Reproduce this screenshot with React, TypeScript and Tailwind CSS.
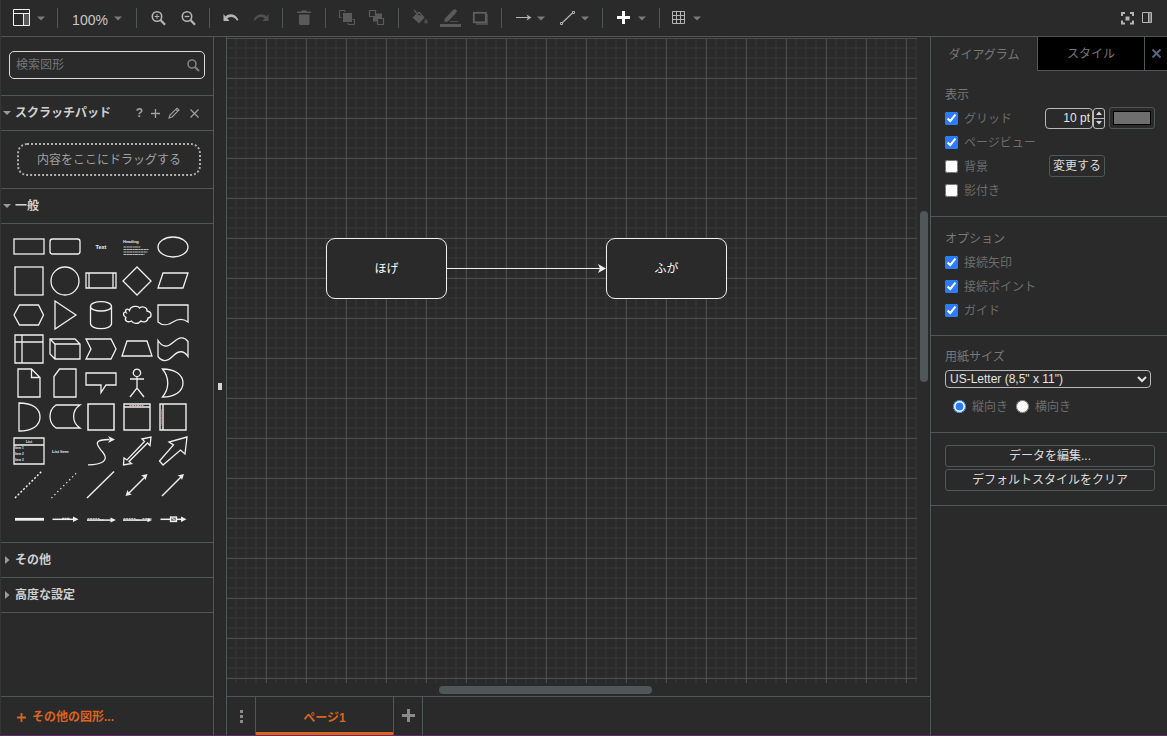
import React, { type ReactNode } from "react";

const canvasGrid =
  "bg-[linear-gradient(to_right,#4c4c4c_1px,transparent_1px),linear-gradient(to_bottom,#4c4c4c_1px,transparent_1px),linear-gradient(to_right,#313131_2px,transparent_2px),linear-gradient(to_bottom,#313131_2px,transparent_2px)] bg-[size:40px_40px,40px_40px,10px_10px,10px_10px] bg-[position:39px_0px,0px_0px,38px_0px,0px_-1px]";

function Caret() {
  return (
    <svg width="8" height="5" viewBox="0 0 8 5" className="shrink-0 fill-[#7a7a7a]" aria-hidden="true">
      <path d="M0 0.5H8L4 4.5Z" />
    </svg>
  );
}

function Icon({ children, className = "w-4" }: { children: ReactNode; className?: string }) {
  return (
    <svg viewBox="0 0 16 16" className={`h-4 shrink-0 overflow-visible ${className}`} fill="none" aria-hidden="true">
      {children}
    </svg>
  );
}

function Tool({ label, children, menu = false }: { label: string; children: ReactNode; menu?: boolean }) {
  return (
    <button
      type="button"
      aria-label={label}
      className={`flex h-7 shrink-0 items-center justify-center gap-1.5 ${menu ? "w-11" : "w-[30px]"}`}
    >
      {children}
      {menu && <Caret />}
    </button>
  );
}

function Group({ width, last = false, children }: { width: string; last?: boolean; children: ReactNode }) {
  return (
    <>
      <div className={`flex shrink-0 items-center justify-center ${width}`}>{children}</div>
      {!last && <div className="h-5 w-px shrink-0 bg-[#505759]" />}
    </>
  );
}

function Toolbar() {
  return (
    <header className="flex h-[37px] shrink-0 items-center border-b border-[#505759]">
      <Group width="w-14">
        <button type="button" aria-label="表示" className="flex h-7 items-center gap-1.5">
          <svg width="18" height="18" viewBox="0 0 18 18" fill="none" aria-hidden="true">
            <rect x="11" y="5" width="5" height="11" fill="#5a5a5a" />
            <path d="M0.5 0.5H16.5V16.5H0.5ZM0.5 4.5H16.5M10.5 4.5V16" stroke="#f0f0f0" />
          </svg>
          <Caret />
        </button>
      </Group>
      <Group width="w-[78px]">
        <button type="button" className="flex h-7 items-center gap-1.5 text-[14px] leading-4 text-[#c8c8c8]">
          <span className="pt-[3px]">100%</span>
          <Caret />
        </button>
      </Group>
      <Group width="w-[72px]">
        <Tool label="拡大">
          <Icon>
            <circle cx="7" cy="6.5" r="4.7" stroke="#b4b4b4" strokeWidth="1.6" />
            <path d="M10.5 10L15 14.8" stroke="#b4b4b4" strokeWidth="2.2" />
            <path d="M7 4.2V8.8M4.7 6.5H9.3" stroke="#b4b4b4" />
          </Icon>
        </Tool>
        <Tool label="縮小">
          <Icon>
            <circle cx="7" cy="6.5" r="4.7" stroke="#b4b4b4" strokeWidth="1.6" />
            <path d="M10.5 10L15 14.8" stroke="#b4b4b4" strokeWidth="2.2" />
            <path d="M4.7 6.5H9.3" stroke="#b4b4b4" strokeWidth="1.4" />
          </Icon>
        </Tool>
      </Group>
      <Group width="w-[72px]">
        <Tool label="元に戻す">
          <Icon>
            <path d="M0.5 4L2.5 6.5C6 3 12.5 3.5 15.5 10L14 10.7C11.5 6.3 7.5 6 4.3 8.3L6.5 11H0.5Z" fill="#b4b4b4" />
          </Icon>
        </Tool>
        <Tool label="やり直し">
          <Icon>
            <path d="M15.5 4L13.5 6.5C10 3 3.5 3.5 0.5 10L2 10.7C4.5 6.3 8.5 6 11.7 8.3L9.5 11H15.5Z" fill="#505050" />
          </Icon>
        </Tool>
      </Group>
      <Group width="w-[42px]">
        <Tool label="削除">
          <Icon>
            <path d="M1 1.5H5L6 0.3H10L11 1.5H15V3H1ZM3 4.5H13.5V14L12.5 15H4L3 14Z" fill="#5a5a5a" />
          </Icon>
        </Tool>
      </Group>
      <Group width="w-[72px]">
        <Tool label="最前面へ">
          <Icon>
            <rect x="4" y="3" width="9" height="9" fill="#5a5a5a" />
            <path d="M6 0.5H0.5V7.5H2.5M15.5 9V14.5H9M9 13V14.5M13.5 9.5H15.5M6 0.5V2" stroke="#5a5a5a" />
          </Icon>
        </Tool>
        <Tool label="最背面へ">
          <Icon>
            <rect x="4" y="3.5" width="9" height="8" fill="#5a5a5a" />
            <path d="M0.5 0.5H6.5V6.5H0.5ZM8.5 8.5H14.5V14.5H8.5Z" fill="#2a2a2a" stroke="#5a5a5a" strokeWidth="1.2" />
          </Icon>
        </Tool>
      </Group>
      <Group width="w-[102px]">
        <Tool label="塗りつぶし色">
          <Icon>
            <path d="M0.5 7.5L7 1.5L12.5 7.5L7 13.5Z" fill="#5a5a5a" />
            <path d="M2 0L8 6.5M3.5 6L7.5 2.5L10.5 6Z" stroke="#5a5a5a" strokeWidth="1.2" fill="#2a2a2a" />
            <path d="M14 8.5C16.5 12 16.5 13.5 14 13.5S11.5 12 14 8.5Z" fill="#4c4c4c" />
          </Icon>
        </Tool>
        <Tool label="線の色">
          <Icon>
            <path d="M2.5 9L10.5 0.5L13 -1L15 1L13.5 3.5L6 11.5L2.5 12Z" fill="#5a5a5a" />
            <path d="M8 11.5H16" stroke="#4c4c4c" />
            <rect x="-2" y="14" width="21" height="3" fill="#5a5a5a" />
          </Icon>
        </Tool>
        <Tool label="影">
          <Icon>
            <path d="M4 15V4H16V15Z" fill="#4a4a4a" />
            <rect x="1.8" y="2.8" width="12" height="9.5" fill="#2a2a2a" stroke="#5f5f5f" strokeWidth="1.8" />
          </Icon>
        </Tool>
      </Group>
      <Group width="w-[100px]">
        <Tool label="接続" menu>
          <Icon>
            <path d="M1 7.5H13" stroke="#b4b4b4" />
            <path d="M11.5 4.5L16.5 7.5L11.5 10.5L13 7.5Z" fill="#b4b4b4" />
          </Icon>
        </Tool>
        <Tool label="ウェイポイント" menu>
          <Icon>
            <path d="M2.5 13.5L14 2.5" stroke="#b4b4b4" strokeWidth="1.2" />
            <path d="M1.5 12.5H3.5V14.5H1.5ZM13.5 1.5H15.5V3.5H13.5Z" fill="#2a2a2a" stroke="#b4b4b4" />
          </Icon>
        </Tool>
      </Group>
      <Group width="w-14">
        <Tool label="挿入" menu>
          <Icon>
            <path d="M7.5 1V14M1 7.5H14" stroke="#ffffff" strokeWidth="3" />
          </Icon>
        </Tool>
      </Group>
      <Group width="w-[52px]" last>
        <Tool label="表" menu>
          <Icon>
            <path d="M1.5 1.5H13.5V13.5H1.5ZM5.5 1.5V13.5M9.5 1.5V13.5M1.5 5.5H13.5M1.5 9.5H13.5" stroke="#b4b4b4" />
          </Icon>
        </Tool>
      </Group>
      <div className="ml-auto flex items-center gap-2 pr-3.5">
        <button type="button" aria-label="全画面">
          <svg width="13" height="13" viewBox="0 0 13 13" fill="none" aria-hidden="true">
            <path d="M1 4V1H4M9 1H12V4M12 8.5V11.5H9M4 11.5H1V8.5" stroke="#b4b4b4" strokeWidth="2" />
            <rect x="4.5" y="4.5" width="4" height="4" fill="#b4b4b4" />
          </svg>
        </button>
        <button type="button" aria-label="フォーマットパネル">
          <svg width="11" height="12" viewBox="0 0 11 12" fill="none" aria-hidden="true">
            <rect x="7" y="1" width="3" height="9" fill="#777777" />
            <path d="M0.5 0.5H9.5V10.5H0.5ZM6.5 1V10.5" stroke="#b4b4b4" />
          </svg>
        </button>
      </div>
    </header>
  );
}

const tiny = { fill: "#eeeeee", stroke: "none", fontWeight: 700 } as const;

const shapes: { name: string; art: ReactNode }[] = [
  { name: "Rectangle", art: <rect x="3.5" y="9.5" width="30" height="15" /> },
  { name: "Rounded Rectangle", art: <rect x="3.5" y="9.5" width="30" height="15" rx="2.5" /> },
  { name: "Text", art: <text x="18.5" y="19.5" textAnchor="middle" fontSize="5.5" {...tiny}>Text</text> },
  {
    name: "Textbox",
    art: (
      <>
        <text x="4.5" y="13.7" fontSize="4" {...tiny}>Heading</text>
        <path d="M5 17.5H22M5 20H30M5 22.5H29M5 25H26" strokeWidth="1.2" strokeDasharray="3 0.4 2 0.3" opacity="0.75" />
      </>
    ),
  },
  { name: "Ellipse", art: <ellipse cx="18.5" cy="17.5" rx="15" ry="10" /> },
  { name: "Square", art: <rect x="4.5" y="3.5" width="28" height="28" /> },
  { name: "Circle", art: <circle cx="18.5" cy="17.5" r="14" /> },
  { name: "Process", art: <path d="M3.5 9.5H33.5V24.5H3.5ZM6.5 9.5V24.5M30.5 9.5V24.5" /> },
  { name: "Diamond", art: <path d="M18.5 3.5L32.5 17.5L18.5 31.5L4.5 17.5Z" /> },
  { name: "Parallelogram", art: <path d="M8.5 9.5H33.5L28.5 24.5H3.5Z" /> },
  { name: "Hexagon", art: <path d="M9 7.5H28L33 17.5L28 27.5H9L3.5 17.5Z" /> },
  { name: "Triangle", art: <path d="M8.5 3.5L29.5 17.5L8.5 31.5Z" /> },
  { name: "Cylinder", art: <path d="M8 9C8 2.5 29 2.5 29 9V26C29 32.8 8 32.8 8 26ZM8 9C8 15 29 15 29 9" /> },
  {
    name: "Cloud",
    art: <path d="M11 13C12 8 20 8 21 10.5C24 8 29 10 28.5 13.5C34 14.5 33.5 20 29.5 20.5C29.5 24 25 25.5 22.5 23.5C19.5 27 14.5 26.5 13 23.5C9 25.5 5.5 23 7.5 20C3.5 18 5 13.5 7.5 15C6 12 9 10.5 11 13Z" />,
  },
  { name: "Document", art: <path d="M3.5 7.5H33.5V24.5C28 20.5 23 21.5 18.5 24.5S8 28.5 3.5 24.5Z" /> },
  { name: "Internal Storage", art: <path d="M4.5 3.5H32.5V31.5H4.5ZM11.5 3.5V31.5M4.5 10.5H32.5" /> },
  { name: "Cube", art: <path d="M3.5 7.5H28.5L33.5 12.5V27.5H8.5L3.5 22.5ZM3.5 7.5L8.5 12.5H33.5M8.5 12.5V27.5" /> },
  { name: "Step", art: <path d="M3.5 7.5H28.5L33.5 17.5L28.5 27.5H3.5L8.5 17.5Z" /> },
  { name: "Trapezoid", art: <path d="M8.5 9.5H28.5L33.5 24.5H3.5Z" /> },
  { name: "Tape", art: <path d="M3.5 9C8 16 13 16 18.5 11S29 4 33.5 10V25C29 18.5 24 19 18.5 24.5S8 31 3.5 25Z" /> },
  { name: "Note", art: <path d="M7.5 3.5H21L29.5 12V31.5H7.5ZM21 3.5V12H29.5" /> },
  { name: "Card", art: <path d="M13 3.5H29.5V31.5H7.5V11Z" /> },
  { name: "Callout", art: <path d="M3.5 7.5H33.5V19.5H23.5L18.5 27V19.5H3.5Z" /> },
  { name: "Actor", art: <path d="M18.5 3.7A3.7 3.7 0 1 1 18.4 3.7ZM18.5 11.2V22.5M11.5 13.5H25.5M11.5 31.5L18.5 22.5L25.5 31.5" /> },
  { name: "Or", art: <path d="M8 3.5C20 3.5 28.5 9 28.5 17.5S20 31.5 8 31.5C15 23 15 12 8 3.5Z" /> },
  { name: "And", art: <path d="M8.5 3.5C22 3.5 29.5 9 29.5 17.5S22 31.5 8.5 31.5Z" /> },
  { name: "Data Storage", art: <path d="M9.5 5.5H33.5C25 11 25 23 33.5 28.5H9.5C1.5 23 1.5 11 9.5 5.5Z" /> },
  { name: "Container", art: <rect x="5.5" y="4.5" width="26" height="26" strokeWidth="1.5" /> },
  {
    name: "Titled Container",
    art: (
      <>
        <path d="M5.5 4.5H31.5V30.5H5.5ZM5.5 7.5H31.5" strokeWidth="1.4" />
        <path d="M11 6H25" stroke="#c9a59c" strokeWidth="1" strokeDasharray="2 0.5" />
      </>
    ),
  },
  {
    name: "Horizontal Container",
    art: (
      <>
        <path d="M5.5 4.5H31.5V30.5H5.5ZM8.5 4.5V30.5" strokeWidth="1.4" />
        <path d="M7 10V26" stroke="#c8564d" strokeWidth="1.2" strokeDasharray="2 0.5" />
      </>
    ),
  },
  {
    name: "List",
    art: (
      <>
        <path d="M3.5 4.5H33.5V30.5H3.5ZM3.5 11.5H33.5" />
        <text x="18.5" y="9.5" textAnchor="middle" fontSize="3.5" {...tiny}>List</text>
        <text x="4.5" y="15.5" fontSize="3" {...tiny}>Item 1</text>
        <text x="4.5" y="21.5" fontSize="3" {...tiny}>Item 2</text>
        <text x="4.5" y="27.5" fontSize="3" {...tiny}>Item 3</text>
      </>
    ),
  },
  { name: "List Item", art: <text x="5.5" y="19.5" fontSize="4" {...tiny}>List Item</text> },
  {
    name: "Curve",
    art: (
      <>
        <path d="M5.5 31.3C19 31.3 27 27.5 20.5 19C12 9.5 12 6 27 6" />
        <path d="M25.5 2.5L32.5 6L25.5 9.5L27.5 6Z" fill="#eeeeee" stroke="none" />
      </>
    ),
  },
  { name: "Bidirectional Arrow", art: <path d="M5 31.5L5.5 24.5L8.5 26.5L26 8L23.5 5.5L32.5 3.5L31.5 12L29 9.5L10.5 28L13 30Z" /> },
  { name: "Arrow", art: <path d="M5 27.5L19 11.5L14.5 8.5L32.5 3.5L30.5 20.5L26 16.5L8.5 31.5Z" /> },
  { name: "Dashed Line", art: <path d="M4.5 30.5L31 4" strokeWidth="1.5" strokeDasharray="2 1.9" /> },
  { name: "Dotted Line", art: <path d="M5 30.5L31 4.5" strokeWidth="1.3" strokeDasharray="1.2 3" /> },
  { name: "Line", art: <path d="M4.5 30.5L31.5 4" strokeWidth="1.4" /> },
  {
    name: "Bidirectional Connector",
    art: (
      <>
        <path d="M10 26L27 9" strokeWidth="1.4" />
        <path d="M7 28.5L9 22.5L10.5 25.5L13.5 27ZM29 6.5L27 12.5L25.5 9.5L22.5 8Z" fill="#eeeeee" stroke="none" />
      </>
    ),
  },
  {
    name: "Directional Connector",
    art: (
      <>
        <path d="M7.5 28.5L27 9" strokeWidth="1.4" />
        <path d="M29.5 6.5L27.5 12.5L26 9.5L23 8Z" fill="#eeeeee" stroke="none" />
      </>
    ),
  },
  { name: "Link", art: <path d="M4.5 17.8H33.5" strokeWidth="2.8" /> },
  {
    name: "Connector with Label",
    art: (
      <>
        <path d="M6 17.8H28" strokeWidth="1.5" />
        <path d="M15.5 17.2H23.5" strokeWidth="2" strokeDasharray="2 0.5" opacity="0.8" />
        <path d="M26.5 15L32 17.8L26.5 20.5Z" fill="#eeeeee" stroke="none" />
      </>
    ),
  },
  {
    name: "Connector with 2 Labels",
    art: (
      <>
        <path d="M4.5 18.6H30" strokeWidth="1.5" />
        <path d="M5 17.3H17M17 18.5H21" strokeWidth="1.4" strokeDasharray="2 0.6" opacity="0.7" />
        <path d="M28 16L33.5 18.6L28 21Z" fill="#eeeeee" stroke="none" />
      </>
    ),
  },
  {
    name: "Connector with 3 Labels",
    art: (
      <>
        <path d="M4.5 18.6H30" strokeWidth="1.5" />
        <path d="M5 17.3H17M17 18.5H21M24 17.3H33" strokeWidth="1.4" strokeDasharray="2 0.6" opacity="0.7" />
        <path d="M29 16.5L33.5 18.6L29 20.8Z" fill="#eeeeee" stroke="none" />
      </>
    ),
  },
  {
    name: "Connector with Symbol",
    art: (
      <>
        <path d="M6 17.8H28" strokeWidth="1.5" />
        <rect x="16" y="15.5" width="6" height="4.5" fill="#777777" />
        <path d="M17 16.4L21 19" strokeWidth="0.8" />
        <path d="M26.5 15L32 17.8L26.5 20.5Z" fill="#eeeeee" stroke="none" />
      </>
    ),
  },
];

function SectionTitle({ open, children, actions }: { open: boolean; children: ReactNode; actions?: ReactNode }) {
  return (
    <div className="flex h-[35px] shrink-0 items-center border-b border-[#505759] pr-3.5">
      <button type="button" aria-expanded={open} className="flex h-full items-center text-[12px] font-bold text-[#d0d0d0]">
        <span className="flex w-3.5 justify-start pl-0.5">
          <svg width="9" height="9" viewBox="0 0 9 9" className="fill-[#9a9a9a]" aria-hidden="true">
            <path d={open ? "M0 2H8L4 6Z" : "M2 0L6.5 4L2 8Z"} />
          </svg>
        </span>
        {children}
      </button>
      {actions}
    </div>
  );
}

function Sidebar() {
  return (
    <aside className="flex w-[213px] shrink-0 flex-col border-r border-[#505759]">
      <div className="border-b border-[#505759] px-2 pt-3.5 pb-4">
        <label className="flex h-7 items-center rounded-[5px] border border-[#dcdcdc] pr-1 pl-1.5">
          <input
            type="search"
            aria-label="検索図形"
            placeholder="検索図形"
            className="min-w-0 flex-1 bg-transparent text-[12px] outline-none placeholder:text-[#757575]"
          />
          <svg width="13" height="13" viewBox="0 0 13 13" fill="none" stroke="#808080" className="shrink-0" aria-hidden="true">
            <circle cx="5" cy="5" r="4" strokeWidth="1.6" />
            <path d="M8 8L12 12" strokeWidth="2.2" />
          </svg>
        </label>
      </div>
      <SectionTitle
        open
        actions={
          <div className="ml-auto flex items-center gap-2 text-[#a0a0a0]">
            <button type="button" aria-label="ヘルプ" className="text-[12px] leading-3 font-bold">?</button>
            <button type="button" aria-label="追加">
              <svg width="9" height="9" viewBox="0 0 9 9" stroke="currentColor" strokeWidth="1.3" aria-hidden="true">
                <path d="M4.5 0V9M0 4.5H9" />
              </svg>
            </button>
            <button type="button" aria-label="編集">
              <svg width="12" height="12" viewBox="0 0 12 12" stroke="currentColor" fill="none" strokeWidth="1.1" aria-hidden="true">
                <path d="M1 11L2 8L9 1.2L11 3L4 10ZM8 2.5L9.7 4.3" />
              </svg>
            </button>
            <button type="button" aria-label="閉じる" className="pl-0.5">
              <svg width="9" height="9" viewBox="0 0 9 9" stroke="currentColor" strokeWidth="1.2" aria-hidden="true">
                <path d="M0.5 0.5L8.5 8.5M8.5 0.5L0.5 8.5" />
              </svg>
            </button>
          </div>
        }
      >
        スクラッチパッド
      </SectionTitle>
      <div className="border-b border-[#505759] py-3 pr-3 pl-4">
        <div className="flex h-[33px] items-center justify-center rounded-[10px] border-2 border-dotted border-[#b0b0b0] text-[12px] text-[#a0a0a0]">
          内容をここにドラッグする
        </div>
      </div>
      <SectionTitle open>一般</SectionTitle>
      <div className="grid shrink-0 grid-cols-[repeat(5,36px)] border-b border-[#505759] pt-1.5 pb-1.5 pl-2.5">
        {shapes.map((shape) => (
          <button key={shape.name} type="button" aria-label={shape.name} className="h-[34px] w-9">
            <svg viewBox="0.5 0.5 36 34" width="36" height="34" fill="none" stroke="#f0f0f0" strokeWidth="1.3" aria-hidden="true">
              {shape.art}
            </svg>
          </button>
        ))}
      </div>
      <SectionTitle open={false}>その他</SectionTitle>
      <SectionTitle open={false}>高度な設定</SectionTitle>
      <button
        type="button"
        className="mt-auto flex h-[39px] shrink-0 items-center gap-1.5 border-t border-[#505759] pt-0.5 pl-4 text-[12px] font-bold text-[#db6421]"
      >
        <svg width="9" height="9" viewBox="0 0 9 9" stroke="currentColor" strokeWidth="1.8" aria-hidden="true">
          <path d="M4.5 0V9M0 4.5H9" />
        </svg>
        その他の図形...
      </button>
    </aside>
  );
}

function Node({ place, children }: { place: string; children: ReactNode }) {
  return (
    <div
      className={`absolute flex h-[61px] w-[121px] items-center justify-center rounded-[9px] border border-[#f0f0f0] bg-[#2a2a2a] text-[12px] text-white ${place}`}
    >
      {children}
    </div>
  );
}

function Editor() {
  return (
    <main className="flex min-w-0 flex-1 flex-col border-l border-[#505759]">
      <div className="relative min-h-0 flex-1 pt-px pr-[13px] pb-[13px]">
        <div className={`relative h-full overflow-hidden ${canvasGrid}`}>
          <Node place="top-[200px] left-[99px]">ほげ</Node>
          <svg className="absolute top-[225px] left-[220px]" width="159" height="11" viewBox="0 0 159 11" aria-hidden="true">
            <path d="M0 5.5H153" stroke="#f0f0f0" />
            <path d="M151 1L159 5.5L151 10L153 5.5Z" fill="#f0f0f0" />
          </svg>
          <Node place="top-[200px] left-[379px]">ふが</Node>
        </div>
        <div className="absolute top-[26.4%] right-0.5 h-[26%] w-2 rounded-full bg-[#505759]" />
        <div className="absolute bottom-0.5 left-[30.2%] h-2 w-[30.2%] rounded-full bg-[#505759]" />
      </div>
      <nav className="flex h-[39px] shrink-0 border-t border-[#505759]">
        <button type="button" aria-label="ページ" className="flex w-7 items-center justify-center">
          <svg width="3" height="13" viewBox="0 0 3 13" fill="#8a8a8a" aria-hidden="true">
            <path d="M0 0H3V3H0ZM0 5H3V8H0ZM0 10H3V13H0Z" />
          </svg>
        </button>
        <button
          type="button"
          className="w-[139px] border-x border-x-[#505759] pt-1 text-[12px] font-bold text-[#db6421] shadow-[inset_0_-3px_0_#db6421]"
        >
          ページ1
        </button>
        <button type="button" aria-label="ページを挿入" className="flex w-[29px] items-center justify-center border-r border-[#505759] pb-0.5">
          <svg width="13" height="13" viewBox="0 0 13 13" stroke="#8a8a8a" strokeWidth="3" aria-hidden="true">
            <path d="M6.5 0V13M0 6.5H13" />
          </svg>
        </button>
      </nav>
    </main>
  );
}

function Check({ label, on = false, children }: { label: string; on?: boolean; children?: ReactNode }) {
  return (
    <div className="flex h-6 items-center">
      <label className="flex items-center gap-1.5 text-[12px] text-[#6c6c6c]">
        <input type="checkbox" defaultChecked={on} className="size-[13px] accent-[#2b7bff]" />
        <span className="pt-0.5">{label}</span>
      </label>
      {children}
    </div>
  );
}

const heading = "flex h-6 items-center pt-0.5 text-[12px] text-[#787878]";
const section = "border-b border-[#505759] pr-3 pl-3.5";
const wide = "h-[22px] rounded-[3px] border border-[#505759] text-[12px] leading-4 text-[#dcdcdc]";

function FormatPanel() {
  return (
    <aside className="w-[237px] shrink-0 border-l border-[#505759]">
      <div className="flex h-[34px] text-[12px] text-[#777777]">
        <button type="button" className="w-[106px] pt-0.5">ダイアグラム</button>
        <button type="button" className="flex-1 border-b border-l border-[#505759] bg-black">スタイル</button>
        <button
          type="button"
          aria-label="パネルを閉じる"
          className="flex w-[23px] items-center justify-center border-b border-l border-[#505759] bg-black"
        >
          <svg width="9" height="9" viewBox="0 0 9 9" stroke="#52677a" strokeWidth="2" aria-hidden="true">
            <path d="M0.5 0.5L8.5 8.5M8.5 0.5L0.5 8.5" />
          </svg>
        </button>
      </div>
      <section className={`${section} pt-[11px] pb-3.5`}>
        <h2 className={heading}>表示</h2>
        <Check label="グリッド" on>
          <input
            type="text"
            aria-label="グリッドサイズ"
            defaultValue="10 pt"
            className="ml-auto h-[21px] w-12 rounded-[4px] border border-[#b8b8b8] bg-transparent pr-0.5 text-right text-[12px] text-[#e4e4e4]"
          />
          <div className="mr-1 flex h-[21px] w-3 flex-col divide-y divide-[#b8b8b8] rounded-[3px] border border-[#b8b8b8]">
            <button type="button" aria-label="増やす" className="flex flex-1 items-center justify-center">
              <svg width="6" height="4" viewBox="0 0 6 4" fill="#d8d8d8" aria-hidden="true"><path d="M0 4L3 0.5L6 4Z" /></svg>
            </button>
            <button type="button" aria-label="減らす" className="flex flex-1 items-center justify-center">
              <svg width="6" height="4" viewBox="0 0 6 4" fill="#d8d8d8" aria-hidden="true"><path d="M0 0L3 3.5L6 0Z" /></svg>
            </button>
          </div>
          <button type="button" aria-label="グリッドの色" className="h-[22px] w-[46px] rounded-[3px] border border-[#505759] p-[3px]">
            <span className="block h-full border border-black bg-[#6e6e6e]" />
          </button>
        </Check>
        <Check label="ページビュー" on />
        <Check label="背景">
          <button type="button" className={`mr-[50px] ml-auto w-14 ${wide}`}>変更する</button>
        </Check>
        <Check label="影付き" />
      </section>
      <section className={`${section} pt-[9px] pb-[13px]`}>
        <h2 className={heading}>オプション</h2>
        <Check label="接続矢印" on />
        <Check label="接続ポイント" on />
        <Check label="ガイド" on />
      </section>
      <section className={`${section} pt-2 pb-3.5`}>
        <h2 className={heading}>
          <label htmlFor="paper">用紙サイズ</label>
        </h2>
        <div className="mt-0.5 flex pr-1">
          <select
            id="paper"
            className="h-[18px] w-full rounded-[4px] border border-[#b8b8b8] bg-[#2a2a2a] text-[12px] leading-4 text-[#e4e4e4]"
          >
            <option>US-Letter (8,5" x 11")</option>
          </select>
        </div>
        <div className="mt-1.5 flex h-6 items-center gap-2 pl-2 text-[12px] text-[#6c6c6c]">
          <label className="flex items-center gap-1.5">
            <input type="radio" name="orientation" defaultChecked className="size-[13px] accent-[#2b7bff]" />
            <span className="pt-0.5">縦向き</span>
          </label>
          <label className="flex items-center gap-1.5">
            <input type="radio" name="orientation" className="size-[13px] accent-[#2b7bff]" />
            <span className="pt-0.5">横向き</span>
          </label>
        </div>
      </section>
      <section className={`${section} flex flex-col gap-0.5 pt-3 pb-3.5`}>
        <button type="button" className={wide}>データを編集...</button>
        <button type="button" className={wide}>デフォルトスタイルをクリア</button>
      </section>
    </aside>
  );
}

export default function App() {
  return (
    <div
      lang="ja"
      className="flex h-screen flex-col overflow-hidden border-b border-l border-b-[#5f2a68] border-l-[#353535] bg-[#2a2a2a] font-['Liberation_Sans','Noto_Sans_CJK_JP',sans-serif]"
    >
      <Toolbar />
      <div className="flex min-h-0 flex-1">
        <Sidebar />
        <div className="flex w-3 shrink-0 items-center justify-center" role="separator" aria-orientation="vertical">
          <div className="h-[7px] w-1 border-x-2 border-white/80" />
        </div>
        <Editor />
        <FormatPanel />
      </div>
    </div>
  );
}
